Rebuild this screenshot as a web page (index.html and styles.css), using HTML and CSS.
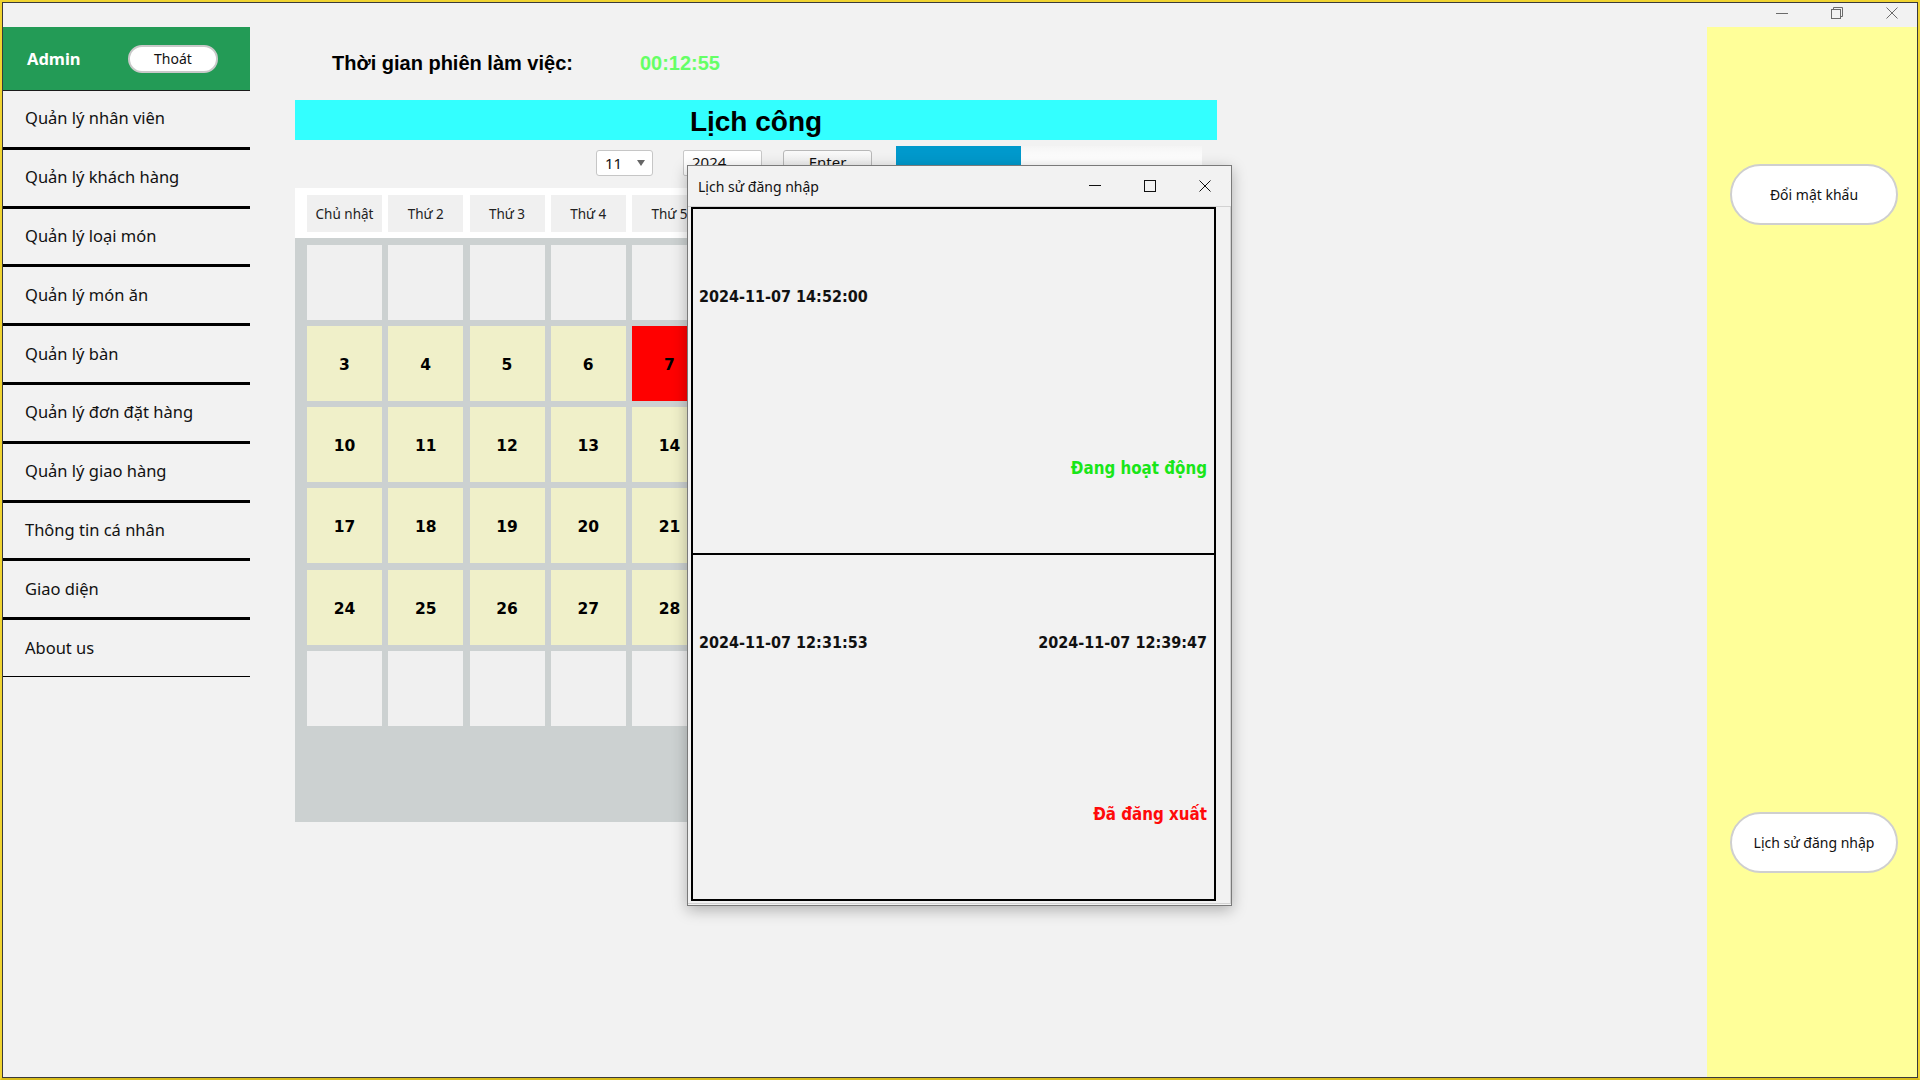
FILE: index.html
```html
<!DOCTYPE html>
<html lang="vi">
<head>
<meta charset="utf-8">
<title>Quản lý</title>
<link rel="stylesheet" href="styles.css">
</head>
<body>
<div class="frame">
  <div class="window">
    <div class="titlebar">
      <div class="caption">
        <svg class="cap-icon" width="12" height="12" viewBox="0 0 12 12"><line x1="0" y1="6.5" x2="12" y2="6.5" stroke="#6b6b6b" stroke-width="1"/></svg>
        <svg class="cap-icon" width="12" height="12" viewBox="0 0 12 12"><rect x="0.5" y="2.5" width="9" height="9" fill="none" stroke="#6b6b6b"/><path d="M2.5 2.5V0.5H11.5V9.5H9.5" fill="none" stroke="#6b6b6b"/></svg>
        <svg class="cap-icon" width="12" height="12" viewBox="0 0 12 12"><path d="M0.5 0.5L11.5 11.5M11.5 0.5L0.5 11.5" stroke="#6b6b6b" stroke-width="1"/></svg>
      </div>
    </div>
    <div class="body">
      <aside class="sidebar">
        <div class="side-head">
          <span class="admin">Admin</span>
          <button class="logout">Thoát</button>
        </div>
        <nav class="menu">
          <div class="menu-item">Quản lý nhân viên</div>
          <div class="menu-item">Quản lý khách hàng</div>
          <div class="menu-item">Quản lý loại món</div>
          <div class="menu-item">Quản lý món ăn</div>
          <div class="menu-item">Quản lý bàn</div>
          <div class="menu-item">Quản lý đơn đặt hàng</div>
          <div class="menu-item">Quản lý giao hàng</div>
          <div class="menu-item">Thông tin cá nhân</div>
          <div class="menu-item">Giao diện</div>
          <div class="menu-item last">About us</div>
        </nav>
      </aside>

      <main class="main">
        <div class="session">
          <span class="session-label">Thời gian phiên làm việc:</span>
          <span class="session-time">00:12:55</span>
        </div>
        <div class="banner">Lịch công</div>
        <div class="controls">
          <div class="combo"><span>11</span><span class="arrow"></span></div>
          <div class="year">2024</div>
          <div class="enter">Enter</div>
          <div class="progress"><div class="progress-fill" style="width:125px"></div></div>
        </div>
        <div class="calendar">
          <div class="week-head">
            <div class="wd">Chủ nhật</div>
            <div class="wd">Thứ 2</div>
            <div class="wd">Thứ 3</div>
            <div class="wd">Thứ 4</div>
            <div class="wd">Thứ 5</div>
            <div class="wd">Thứ 6</div>
            <div class="wd">Thứ 7</div>
          </div>
          <div class="days">
            <div class="day empty"></div><div class="day empty"></div><div class="day empty"></div><div class="day empty"></div><div class="day empty"></div><div class="day"></div><div class="day"></div>
            <div class="day">3</div><div class="day">4</div><div class="day">5</div><div class="day">6</div><div class="day today">7</div><div class="day">8</div><div class="day">9</div>
            <div class="day">10</div><div class="day">11</div><div class="day">12</div><div class="day">13</div><div class="day">14</div><div class="day">15</div><div class="day">16</div>
            <div class="day">17</div><div class="day">18</div><div class="day">19</div><div class="day">20</div><div class="day">21</div><div class="day">22</div><div class="day">23</div>
            <div class="day">24</div><div class="day">25</div><div class="day">26</div><div class="day">27</div><div class="day">28</div><div class="day">29</div><div class="day">30</div>
            <div class="day empty"></div><div class="day empty"></div><div class="day empty"></div><div class="day empty"></div><div class="day empty"></div><div class="day empty"></div><div class="day empty"></div>
          </div>
        </div>
      </main>

      <aside class="right">
        <button class="pill">Đổi mật khẩu</button>
        <button class="pill second">Lịch sử đăng nhập</button>
      </aside>
    </div>

    <div class="dialog">
      <div class="dlg-title">
        <span class="dlg-text">Lịch sử đăng nhập</span>
        <div class="dlg-caption">
          <svg width="12" height="12" viewBox="0 0 12 12"><line x1="0" y1="5.5" x2="12" y2="5.5" stroke="#111"/></svg>
          <svg width="12" height="12" viewBox="0 0 12 12"><rect x="0.5" y="0.5" width="11" height="11" fill="none" stroke="#111"/></svg>
          <svg width="12" height="12" viewBox="0 0 12 12"><path d="M0.5 0.5L11.5 11.5M11.5 0.5L0.5 11.5" stroke="#111"/></svg>
        </div>
      </div>
      <div class="scrollpane">
        <div class="records">
          <div class="record">
            <div class="rec-times"><span>2024-11-07 14:52:00</span><span></span></div>
            <div class="rec-status active">Đang hoạt động</div>
          </div>
          <div class="record">
            <div class="rec-times"><span>2024-11-07 12:31:53</span><span>2024-11-07 12:39:47</span></div>
            <div class="rec-status out">Đã đăng xuất</div>
          </div>
        </div>
      </div>
    </div>
  </div>
</div>
</body>
</html>
```

FILE: styles.css
```css
* { box-sizing: border-box; }

html, body {
  margin: 0;
  padding: 0;
  width: 1920px;
  height: 1080px;
  overflow: hidden;
  font-family: "Noto Sans", "Open Sans", sans-serif;
  color: #111;
}

.frame {
  width: 1920px;
  height: 1080px;
  border: 2px solid #f0d431;
  border-bottom-color: #d8bc1c;
}

.window {
  position: relative;
  width: 100%;
  height: 100%;
  border: 1px solid #3a3a3a;
  background: #f2f2f2;
  display: flex;
  flex-direction: column;
}

/* main window title bar */
.titlebar {
  height: 24px;
  flex: none;
  display: flex;
  justify-content: flex-end;
}
.caption {
  display: flex;
  gap: 43px;
  padding-top: 4px;
  padding-right: 19px;
}
.cap-icon { display: block; }

.body {
  flex: 1;
  display: flex;
  min-height: 0;
}

/* sidebar */
.sidebar {
  width: 247px;
  flex: none;
}
.side-head {
  height: 64px;
  background: #239b56;
  border-bottom: 1px solid #1b1b1b;
  display: flex;
  align-items: center;
  justify-content: space-between;
  padding: 0 32px 0 24px;
}
.admin {
  color: #fff;
  font-weight: 700;
  font-size: 16.5px;
}
.logout {
  width: 90px;
  height: 28px;
  border-radius: 14px;
  border: 2px solid #c9c9c9;
  background: #fff;
  font-family: "Noto Sans", sans-serif;
  font-size: 14px;
  color: #111;
  padding: 0;
}
.menu-item {
  height: 58.8px;
  border-bottom: 3px solid #000;
  display: flex;
  align-items: center;
  padding-left: 22px;
  padding-bottom: 2px;
  font-size: 16.5px;
  color: #111;
}
.menu-item.last {
  height: 57px;
  border-bottom-width: 1px;
}

/* main */
.main {
  flex: 1;
  padding-left: 45px;
  padding-top: 24px;
}
.session {
  height: 24px;
  display: flex;
  align-items: center;
  padding-left: 37px;
  font-family: "Liberation Sans", Arial, sans-serif;
  font-weight: 700;
  font-size: 20px;
}
.session-label { color: #000; }
.session-time { color: #66ff66; margin-left: 67px; }

.banner {
  margin-top: 25px;
  width: 922px;
  height: 40px;
  background: #33ffff;
  text-align: center;
  font-family: "Liberation Sans", Arial, sans-serif;
  font-weight: 700;
  font-size: 28px;
  line-height: 44px;
  color: #000;
}

.controls {
  margin-top: 6px;
  height: 30px;
  display: flex;
  align-items: flex-end;
  padding-left: 301px;
  font-size: 15px;
}
.combo {
  width: 57px;
  height: 26px;
  background: #fff;
  border: 1px solid #c6c6c6;
  border-radius: 3px;
  display: flex;
  align-items: center;
  justify-content: space-between;
  padding: 0 7px 0 8px;
  margin-right: 30px;
}
.arrow {
  width: 0;
  height: 0;
  border-left: 4.5px solid transparent;
  border-right: 4.5px solid transparent;
  border-top: 6px solid #666;
}
.year {
  width: 79px;
  height: 26px;
  background: #fff;
  border: 1px solid #c8c8c8;
  border-radius: 2px;
  padding-left: 8px;
  line-height: 22px;
  margin-right: 21px;
}
.enter {
  width: 89px;
  height: 26px;
  background: linear-gradient(#fafafa, #e6e6e6);
  border: 1px solid #b8b8b8;
  border-radius: 3px;
  text-align: center;
  line-height: 22px;
  margin-right: 24px;
}
.progress {
  width: 306px;
  height: 30px;
  background: linear-gradient(#f4f4f4, #ffffff 40%, #ffffff);
}
.progress-fill {
  height: 100%;
  background: #0099cc;
}

/* calendar */
.calendar {
  margin-top: 12px;
  width: 585px;
}
.week-head {
  height: 50px;
  background: #fff;
  display: grid;
  grid-template-columns: repeat(7, 75px);
  column-gap: 6.25px;
  padding: 7px 12px 6px;
}
.wd {
  background: #f0f0f0;
  display: flex;
  align-items: center;
  justify-content: center;
  font-size: 13.5px;
  color: #222;
}
.days {
  height: 584px;
  background: #ccd1d1;
  display: grid;
  grid-template-columns: repeat(7, 75px);
  grid-template-rows: repeat(6, 75px);
  gap: 6.25px;
  padding: 6.5px 12px;
  align-content: start;
}
.day {
  background: #f0f0c9;
  display: flex;
  align-items: center;
  justify-content: center;
  padding-top: 3px;
  font-family: "DejaVu Sans", sans-serif;
  font-weight: 700;
  font-size: 15.5px;
  color: #000;
}
.day.empty { background: #f0f0f0; }
.day.today { background: #ff0000; }

/* right panel */
.right {
  width: 210px;
  flex: none;
  background: #ffff99;
  padding-top: 137px;
  padding-left: 23px;
  display: flex;
  flex-direction: column;
  align-items: flex-start;
}
.pill {
  width: 168px;
  height: 61px;
  border-radius: 31px;
  border: 2px solid #cfcfcf;
  background: #fff;
  font-family: "Noto Sans", sans-serif;
  font-size: 14px;
  color: #111;
  padding: 0;
}
.pill.second { margin-top: 587px; }

/* dialog */
.dialog {
  position: absolute;
  left: 684px;
  top: 162px;
  width: 545px;
  height: 741px;
  background: #f2f2f2;
  border: 1px solid #7a7a7a;
  box-shadow: 0 4px 14px rgba(0, 0, 0, 0.28);
  display: flex;
  flex-direction: column;
}
.dlg-title {
  height: 40px;
  flex: none;
  display: flex;
  align-items: center;
  justify-content: space-between;
  padding-left: 10px;
}
.dlg-text { font-size: 14px; color: #111; }
.dlg-caption {
  display: flex;
  align-items: center;
  gap: 43px;
  padding-right: 20px;
}
.dlg-caption svg { display: block; }
.scrollpane {
  height: 698px;
  border: 1px solid #d2d2d2;
  border-left: 0;
  padding-left: 3px;
  display: flex;
}
.records {
  width: 525px;
}
.record {
  height: 348px;
  border: 2px solid #000;
  padding: 0 7px 0 6px;
  font-family: "DejaVu Sans", sans-serif;
  font-weight: 700;
  font-size: 16px;
  font-stretch: condensed;
}
.record + .record { margin-top: -2px; }
.rec-times {
  margin-top: 78px;
  height: 20px;
  line-height: 20px;
  display: flex;
  justify-content: space-between;
  color: #111;
}
.rec-status {
  margin-top: 151px;
  height: 20px;
  line-height: 20px;
  text-align: right;
  font-size: 16.8px;
}
.rec-status.active { color: #19e619; }
.rec-status.out { color: #ff0a0a; }
```
